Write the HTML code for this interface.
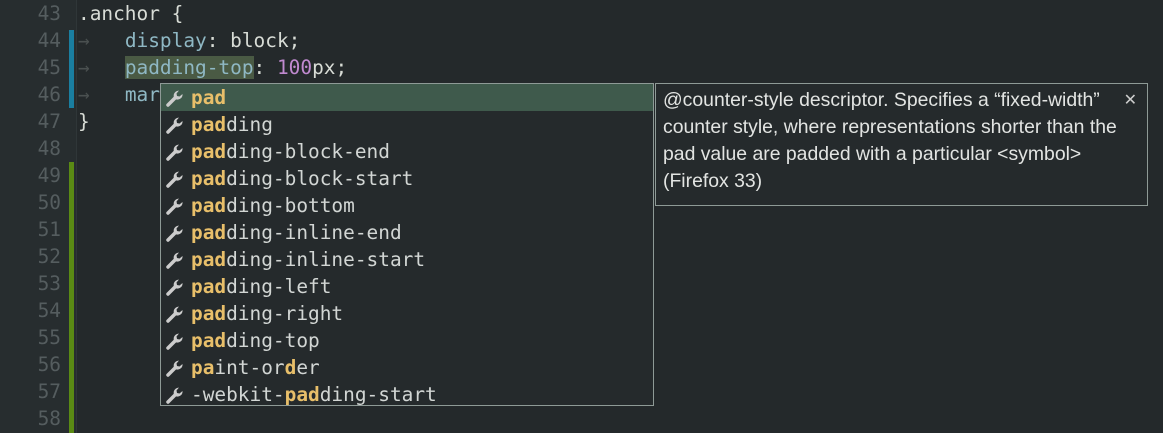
<!DOCTYPE html>
<html><head><style>
body{margin:0;width:1163px;height:433px;background:#24292b;overflow:hidden;position:relative;font-family:"DejaVu Sans Mono","Liberation Mono",monospace;font-size:19.45px}
.gut{position:absolute;left:0;top:0;width:76px;height:433px;background:#272d2f;border-right:1px solid #2f3638}
.ln{position:absolute;left:0;width:61px;text-align:right;color:#555d5f;height:27px;line-height:27px}
.bar{position:absolute;left:69px;width:5px}
.code{position:absolute;left:78px;height:27px;line-height:27px;color:#d8dcd6;white-space:pre}
.tab{color:#4a5050}
.pop{position:absolute;left:160px;top:83px;width:492px;height:321px;border:1px solid #8e9a96;background:#252a2c}
.row{height:27px;line-height:27px;position:relative;padding-left:30px;color:#d2d6d4;white-space:pre}
.row.sel{background:#3f5a4c}
.row b{color:#e8bf6a;font-weight:bold}
.row svg{position:absolute;left:4px;top:4px}
.tip{position:absolute;left:655px;top:83px;width:476px;height:114px;border:1px solid #8e9a96;background:#252a2c;color:#e2e4e2;font-family:"Liberation Sans",sans-serif;font-size:19.4px;line-height:27px;padding:3px 8px 4px 7px;white-space:nowrap}
.x{position:absolute;right:10px;top:3px;font-size:16px;color:#ccc}
</style></head><body>
<div class="gut"></div>
<div class="ln" style="top:0">43</div><div class="ln" style="top:27px">44</div><div class="ln" style="top:54px">45</div><div class="ln" style="top:81px">46</div><div class="ln" style="top:108px">47</div><div class="ln" style="top:135px">48</div><div class="ln" style="top:162px">49</div><div class="ln" style="top:189px">50</div><div class="ln" style="top:216px">51</div><div class="ln" style="top:243px">52</div><div class="ln" style="top:270px">53</div><div class="ln" style="top:297px">54</div><div class="ln" style="top:324px">55</div><div class="ln" style="top:351px">56</div><div class="ln" style="top:378px">57</div><div class="ln" style="top:405px">58</div>
<div class="bar" style="top:30px;height:78px;background:#1a7ea0"></div>
<div class="bar" style="top:162px;height:271px;background:#5a8a14"></div>
<div class="code" style="top:0">.anchor {</div>
<div class="code" style="top:27px"><span class="tab">→</span>   <span style="color:#8fb8c4">display</span>: block;</div>
<div class="code" style="top:54px"><span class="tab">→</span>   <span style="color:#8fb8c4;background:#4a5a44">padding-top</span>: <span style="color:#c08ad0">100</span>px;</div>
<div class="code" style="top:81px"><span class="tab">→</span>   <span style="color:#8fb8c4">mar</span></div>
<div class="code" style="top:108px">}</div>
<div class="pop">
<div class="row sel"><svg width="20" height="20" viewBox="0 0 20 20"><path d="M3 17 L10 10" stroke="#ccc" stroke-width="3.5" stroke-linecap="round"/><path d="M9.5 10.5 A5 5 0 0 1 12 3 L14 2.5 L11.5 5.5 L12 8 L14.5 8.5 L17.5 6 A5 5 0 0 1 9.5 10.5 Z" fill="#ccc"/></svg><b>pad</b></div>
<div class="row"><svg width="20" height="20" viewBox="0 0 20 20"><path d="M3 17 L10 10" stroke="#ccc" stroke-width="3.5" stroke-linecap="round"/><path d="M9.5 10.5 A5 5 0 0 1 12 3 L14 2.5 L11.5 5.5 L12 8 L14.5 8.5 L17.5 6 A5 5 0 0 1 9.5 10.5 Z" fill="#ccc"/></svg><b>pad</b>ding</div>
<div class="row"><svg width="20" height="20" viewBox="0 0 20 20"><path d="M3 17 L10 10" stroke="#ccc" stroke-width="3.5" stroke-linecap="round"/><path d="M9.5 10.5 A5 5 0 0 1 12 3 L14 2.5 L11.5 5.5 L12 8 L14.5 8.5 L17.5 6 A5 5 0 0 1 9.5 10.5 Z" fill="#ccc"/></svg><b>pad</b>ding-block-end</div>
<div class="row"><svg width="20" height="20" viewBox="0 0 20 20"><path d="M3 17 L10 10" stroke="#ccc" stroke-width="3.5" stroke-linecap="round"/><path d="M9.5 10.5 A5 5 0 0 1 12 3 L14 2.5 L11.5 5.5 L12 8 L14.5 8.5 L17.5 6 A5 5 0 0 1 9.5 10.5 Z" fill="#ccc"/></svg><b>pad</b>ding-block-start</div>
<div class="row"><svg width="20" height="20" viewBox="0 0 20 20"><path d="M3 17 L10 10" stroke="#ccc" stroke-width="3.5" stroke-linecap="round"/><path d="M9.5 10.5 A5 5 0 0 1 12 3 L14 2.5 L11.5 5.5 L12 8 L14.5 8.5 L17.5 6 A5 5 0 0 1 9.5 10.5 Z" fill="#ccc"/></svg><b>pad</b>ding-bottom</div>
<div class="row"><svg width="20" height="20" viewBox="0 0 20 20"><path d="M3 17 L10 10" stroke="#ccc" stroke-width="3.5" stroke-linecap="round"/><path d="M9.5 10.5 A5 5 0 0 1 12 3 L14 2.5 L11.5 5.5 L12 8 L14.5 8.5 L17.5 6 A5 5 0 0 1 9.5 10.5 Z" fill="#ccc"/></svg><b>pad</b>ding-inline-end</div>
<div class="row"><svg width="20" height="20" viewBox="0 0 20 20"><path d="M3 17 L10 10" stroke="#ccc" stroke-width="3.5" stroke-linecap="round"/><path d="M9.5 10.5 A5 5 0 0 1 12 3 L14 2.5 L11.5 5.5 L12 8 L14.5 8.5 L17.5 6 A5 5 0 0 1 9.5 10.5 Z" fill="#ccc"/></svg><b>pad</b>ding-inline-start</div>
<div class="row"><svg width="20" height="20" viewBox="0 0 20 20"><path d="M3 17 L10 10" stroke="#ccc" stroke-width="3.5" stroke-linecap="round"/><path d="M9.5 10.5 A5 5 0 0 1 12 3 L14 2.5 L11.5 5.5 L12 8 L14.5 8.5 L17.5 6 A5 5 0 0 1 9.5 10.5 Z" fill="#ccc"/></svg><b>pad</b>ding-left</div>
<div class="row"><svg width="20" height="20" viewBox="0 0 20 20"><path d="M3 17 L10 10" stroke="#ccc" stroke-width="3.5" stroke-linecap="round"/><path d="M9.5 10.5 A5 5 0 0 1 12 3 L14 2.5 L11.5 5.5 L12 8 L14.5 8.5 L17.5 6 A5 5 0 0 1 9.5 10.5 Z" fill="#ccc"/></svg><b>pad</b>ding-right</div>
<div class="row"><svg width="20" height="20" viewBox="0 0 20 20"><path d="M3 17 L10 10" stroke="#ccc" stroke-width="3.5" stroke-linecap="round"/><path d="M9.5 10.5 A5 5 0 0 1 12 3 L14 2.5 L11.5 5.5 L12 8 L14.5 8.5 L17.5 6 A5 5 0 0 1 9.5 10.5 Z" fill="#ccc"/></svg><b>pad</b>ding-top</div>
<div class="row"><svg width="20" height="20" viewBox="0 0 20 20"><path d="M3 17 L10 10" stroke="#ccc" stroke-width="3.5" stroke-linecap="round"/><path d="M9.5 10.5 A5 5 0 0 1 12 3 L14 2.5 L11.5 5.5 L12 8 L14.5 8.5 L17.5 6 A5 5 0 0 1 9.5 10.5 Z" fill="#ccc"/></svg><b>pa</b>int-or<b>d</b>er</div>
<div class="row"><svg width="20" height="20" viewBox="0 0 20 20"><path d="M3 17 L10 10" stroke="#ccc" stroke-width="3.5" stroke-linecap="round"/><path d="M9.5 10.5 A5 5 0 0 1 12 3 L14 2.5 L11.5 5.5 L12 8 L14.5 8.5 L17.5 6 A5 5 0 0 1 9.5 10.5 Z" fill="#ccc"/></svg>-webkit-<b>pad</b>ding-start</div>
</div>
<div class="tip"><span class="x">✕</span>@counter-style descriptor. Specifies a “fixed-width”<br>counter style, where representations shorter than the<br>pad value are padded with a particular &lt;symbol&gt;<br>(Firefox 33)</div>
</body></html>
